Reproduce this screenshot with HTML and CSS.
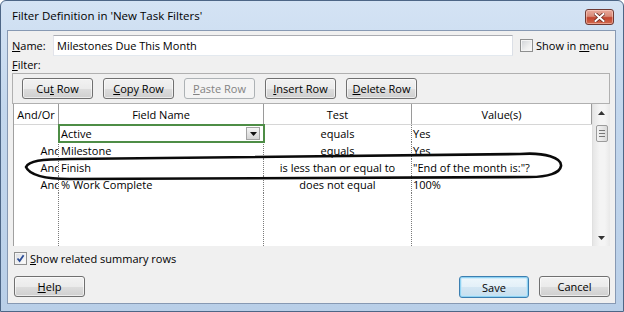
FILE: index.html
```html
<!DOCTYPE html>
<html>
<head>
<meta charset="utf-8">
<title>Filter Definition</title>
<link rel="stylesheet" href="styles.css">
</head>
<body>
<div class="window">
  <div class="titlebar">
    <span class="title">Filter Definition in 'New Task Filters'</span>
    <span class="close">
      <svg width="11" height="9" viewBox="0 0 11 9">
        <path d="M1.5 1 L9.5 8 M9.5 1 L1.5 8" stroke="#6b2a22" stroke-width="3.6" stroke-linecap="square"/>
        <path d="M1.5 1 L9.5 8 M9.5 1 L1.5 8" stroke="#ffffff" stroke-width="2" stroke-linecap="square"/>
      </svg>
    </span>
  </div>
  <div class="client">
    <div class="name-row">
      <span class="lbl"><u>N</u>ame:</span>
      <div class="textbox">Milestones Due This Month</div>
      <span class="chk menu-chk"><span class="box"></span><span class="chk-text">Show in <u>m</u>enu</span></span>
    </div>
    <div class="filter-lbl"><u>F</u>ilter:</div>
    <div class="toolbar">
      <span class="btn"><span>Cu<u>t</u> Row</span></span>
      <span class="btn"><span><u>C</u>opy Row</span></span>
      <span class="btn disabled"><span><u>P</u>aste Row</span></span>
      <span class="btn"><span><u>I</u>nsert Row</span></span>
      <span class="btn"><span><u>D</u>elete Row</span></span>
    </div>
    <div class="grid">
      <div class="table">
        <div class="row head">
          <div class="cell">And/Or</div>
          <div class="cell">Field Name</div>
          <div class="cell">Test</div>
          <div class="cell">Value(s)</div>
        </div>
        <div class="row">
          <div class="cell andor"></div>
          <div class="cell field active"><span>Active</span><span class="dd"><svg width="7" height="4" viewBox="0 0 7 4"><path d="M0 0 H7 L3.5 4 Z" fill="#111"/></svg></span></div>
          <div class="cell test">equals</div>
          <div class="cell value">Yes</div>
        </div>
        <div class="row">
          <div class="cell andor"><span>And</span></div>
          <div class="cell field">Milestone</div>
          <div class="cell test">equals</div>
          <div class="cell value">Yes</div>
        </div>
        <div class="row">
          <div class="cell andor"><span>And</span></div>
          <div class="cell field">Finish</div>
          <div class="cell test">is less than or equal to</div>
          <div class="cell value">"End of the month is:"?</div>
        </div>
        <div class="row">
          <div class="cell andor"><span>And</span></div>
          <div class="cell field">% Work Complete</div>
          <div class="cell test">does not equal</div>
          <div class="cell value">100%</div>
        </div>
        <div class="row filler">
          <div class="cell"></div>
          <div class="cell"></div>
          <div class="cell"></div>
          <div class="cell"></div>
        </div>
      </div>
      <div class="scroll">
        <div class="sbtn"><svg width="7" height="4" viewBox="0 0 7 4"><path d="M0 4 H7 L3.5 0 Z" fill="#333"/></svg></div>
        <div class="thumb"><i></i><i></i><i></i></div>
        <div class="track"></div>
        <div class="sbtn"><svg width="7" height="4" viewBox="0 0 7 4"><path d="M0 0 H7 L3.5 4 Z" fill="#333"/></svg></div>
      </div>
      <svg class="oval" viewBox="13 104 597 142" width="597" height="142">
        <path d="M26 167 C29 161 40 159 70 159 L520 154 C545 152 562 158 561 166 C560 173 548 177 530 177 L70 179 C42 179 29 174 26 167 Z" fill="none" stroke="#0a0a0a" stroke-width="2.6" stroke-linejoin="round"/>
      </svg>
    </div>
    <div class="chk summary"><span class="box checked"><svg width="9" height="9" viewBox="0 0 9 9"><path d="M1.5 4.5 L3.6 7 L7.6 1.2" fill="none" stroke="#2a4c96" stroke-width="1.8"/></svg></span><span class="chk-text"><u>S</u>how related summary rows</span></div>
    <div class="actions">
      <span class="btn help"><span><u>H</u>elp</span></span>
      <span class="spacer"></span>
      <span class="btn default save"><span>Save</span></span>
      <span class="btn cancel"><span>Cancel</span></span>
    </div>
  </div>
</div>
</body>
</html>
```
FILE: styles.css
```css
* { box-sizing: border-box; }
html, body { margin: 0; padding: 0; }
body {
  width: 624px;
  height: 312px;
  overflow: hidden;
  font-family: "Open Sans", "Noto Sans", sans-serif;
  font-size: 11px;
  color: #000;
  background: #fff;
}
u { text-decoration: underline; text-underline-offset: 1px; }

.window {
  width: 624px;
  height: 312px;
  border: 1px solid #4d6686;
  border-radius: 6px 6px 0 0;
  background: linear-gradient(180deg, #d4e3f4 0%, #c3d7ed 35%, #b9cfe8 100%);
  padding: 0 7px 7px 6px;
  display: flex;
  flex-direction: column;
}

.titlebar {
  height: 29px;
  display: flex;
  align-items: flex-start;
  justify-content: space-between;
}
.title {
  margin-left: 5px;
  line-height: 29px;
  font-size: 11.5px;
  color: #000;
}
.close {
  margin-top: 8px;
  margin-right: 2px;
  width: 29px;
  height: 16px;
  border: 1px solid #6e3a34;
  border-radius: 3px;
  background: linear-gradient(180deg, #e9a99b 0%, #d88a78 45%, #c2442e 55%, #d16a4f 100%);
  box-shadow: inset 0 0 0 1px rgba(255, 220, 210, 0.5);
  display: flex;
  align-items: center;
  justify-content: center;
}

.client {
  flex: 1;
  border: 1px solid #8799b3;
  background: #f0f0f0;
  padding: 4px 5px 5px 4px;
  display: flex;
  flex-direction: column;
}

.name-row {
  height: 21px;
  display: flex;
  align-items: center;
}
.lbl { width: 41px; }
.textbox {
  width: 460px;
  height: 21px;
  border: 1px solid;
  border-color: #abadb3 #dbdfe6 #e3e9ef #e2e3ea;
  background: #fff;
  padding-left: 3px;
  line-height: 19px;
}
.chk { display: flex; align-items: center; }
.menu-chk { margin-left: 7px; }
.box {
  width: 13px;
  height: 13px;
  border: 1px solid #8e8f8f;
  background: linear-gradient(135deg, #cfd2d6 0%, #eeeeee 60%, #fafafa 100%);
  box-shadow: inset 0 0 0 1px #f4f4f4;
  display: flex;
  align-items: center;
  justify-content: center;
}
.box.checked {
  background: linear-gradient(135deg, #d9dde3 0%, #f4f4f4 70%, #fff 100%);
}
.chk-text { margin-left: 3px; }

.filter-lbl {
  height: 17px;
  line-height: 17px;
}

.toolbar {
  height: 31px;
  border: 1px solid #b0b0b0;
  background: #f0f0f0;
  padding: 4px 0 4px 9px;
  display: flex;
  gap: 10px;
}

.btn {
  width: 71px;
  height: 21px;
  border: 1px solid #707070;
  border-radius: 3px;
  background: linear-gradient(180deg, #f2f2f2 0%, #ebebeb 50%, #dddddd 51%, #cfcfcf 100%);
  box-shadow: inset 0 0 0 1px rgba(255, 255, 255, 0.6);
  display: flex;
  align-items: center;
  justify-content: center;
  line-height: 19px;
  white-space: nowrap;
}
.btn.disabled {
  border-color: #adb2b5;
  background: #f4f4f4;
  color: #838383;
  box-shadow: none;
}

.grid {
  height: 142px;
  margin-left: 1px;
  border-left: 1px solid #a0a0a0;
  background: #fff;
  display: flex;
  position: relative;
}
.table {
  flex: 1;
  display: flex;
  flex-direction: column;
}
.row {
  display: grid;
  grid-template-columns: 45px 205px 148px 180px;
  height: 17px;
}
.row .cell {
  border-right: 1px dotted #7a7a7a;
  line-height: 17px;
  white-space: nowrap;
  overflow: hidden;
}
.row .cell:last-child { border-right: none; }
.row.head {
  height: 21px;
  border-bottom: 1px solid #d6d6d6;
}
.row.head .cell {
  border-right: 1px solid #9a9a9a;
  text-align: center;
  line-height: 17px;
  padding-top: 2px;
}
.row.filler { flex: 1; height: auto; }

.andor { text-align: right; }
.andor span { display: inline-block; margin-right: -3px; }
.field { padding-left: 2px; }
.test { text-align: center; }
.value { padding-left: 1px; }

.field.active {
  overflow: visible;
  position: relative;
  z-index: 1;
  outline: 2px solid #4e8d46;
  outline-offset: -1px;
  display: flex;
  align-items: center;
  justify-content: space-between;
}
.dd {
  width: 14px;
  height: 13px;
  margin-right: 3px;
  border: 1px solid #a3a3a3;
  background: linear-gradient(180deg, #f5f5f5 0%, #e4e4e4 50%, #d4d4d4 100%);
  display: flex;
  align-items: center;
  justify-content: center;
}

.scroll {
  width: 18px;
  border-left: 1px solid #e0e0e0;
  background: linear-gradient(90deg, #e6e6e6 0%, #f4f4f4 40%, #f4f4f4 70%, #e9e9e9 100%);
  display: flex;
  flex-direction: column;
  align-items: center;
}
.sbtn {
  height: 17px;
  width: 100%;
  display: flex;
  align-items: center;
  justify-content: center;
}
.thumb {
  margin-top: 4px;
  width: 12px;
  height: 17px;
  border: 1px solid #9c9c9c;
  border-radius: 2px;
  background: linear-gradient(90deg, #f3f3f3 0%, #e8e8e8 50%, #d9d9d9 100%);
  display: flex;
  flex-direction: column;
  align-items: center;
  justify-content: center;
  gap: 2px;
}
.thumb i {
  display: block;
  width: 6px;
  height: 1px;
  background: #777;
}
.track { flex: 1; }

.oval {
  position: absolute;
  left: -1px;
  top: 0;
  pointer-events: none;
  overflow: visible;
}

.summary {
  margin-top: 6px;
  height: 13px;
  padding-left: 2px;
}

.actions {
  margin-top: 11px;
  height: 22px;
  display: flex;
  padding-left: 2px;
}
.actions .btn { height: 21px; }
.spacer { flex: 1; }
.save {
  width: 70px;
  height: 22px !important;
  margin-right: 10px;
  border-color: #3c7fb1;
  background: linear-gradient(180deg, #eef7fc 0%, #e3f0f8 50%, #d3e6f3 51%, #c7dfee 100%);
  box-shadow: inset 0 0 0 1px #8fd2f2, inset 0 0 0 2px rgba(190, 230, 250, 0.6);
}
.cancel { width: 71px; }
```
